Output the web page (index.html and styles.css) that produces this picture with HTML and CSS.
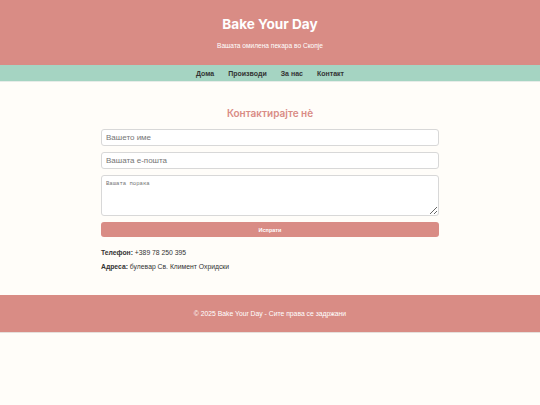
FILE: index.html
```
<!DOCTYPE html>
<html lang="mk">
<head>
<meta charset="utf-8">
<title>Bake Your Day</title>
<link rel="stylesheet" href="styles.css">
</head>
<body>
<header class="site-header">
  <h1 class="brand">Bake Your Day</h1>
  <p class="tagline">Вашата омилена пекара во Скопје</p>
</header>
<nav class="nav">
  <a href="#">Дома</a>
  <a href="#">Производи</a>
  <a href="#">За нас</a>
  <a href="#">Контакт</a>
</nav>
<main class="main">
  <h2 class="title">Контактирајте нè</h2>
  <form class="form">
    <input class="field" type="text" placeholder="Вашето име">
    <input class="field" type="email" placeholder="Вашата е-пошта">
    <textarea class="field area" placeholder="Вашата порака"></textarea>
    <button class="btn" type="button">Испрати</button>
  </form>
  <p class="info"><strong>Телефон:</strong> +389 78 250 395</p>
  <p class="info"><strong>Адреса:</strong> булевар Св. Климент Охридски</p>
</main>
<footer class="footer">
  <p>© 2025 Bake Your Day - Сите права се задржани</p>
</footer>
</body>
</html>
```
FILE: styles.css
```
* { box-sizing: border-box; }
html, body { margin: 0; padding: 0; }
body {
  background: #fffdf9;
  font-family: "Liberation Sans", Arial, sans-serif;
  color: #333;
}
.site-header {
  background: #d98c85;
  color: #fff;
  text-align: center;
  height: 65px;
  padding-top: 16px;
}
.brand {
  margin: 0;
  font-family: Inter, "Liberation Sans", sans-serif;
  font-size: 13.6px;
  font-weight: 700;
  line-height: 17px;
}
.tagline {
  margin: 8px 0 0;
  font-size: 6.6px;
  line-height: 9px;
}
.nav {
  background: #a5d4c2;
  height: 17px;
  display: flex;
  justify-content: center;
  align-items: center;
  gap: 14px;
  border-bottom: 1px solid #e6ece8;
}
.nav a {
  color: #333;
  text-decoration: none;
  font-weight: 700;
  font-size: 7px;
}
.main {
  width: 338px;
  margin: 0 auto;
  padding: 24px 0 23px;
}
.title {
  margin: 0 0 9px;
  text-align: center;
  color: #d98c85;
  font-family: Inter, "Liberation Sans", sans-serif;
  font-size: 10px;
  font-weight: 600;
  line-height: 14px;
}
.form {
  display: flex;
  flex-direction: column;
  gap: 6px;
}
.field {
  display: block;
  width: 100%;
  height: 17px;
  border: 1px solid #d8d8d8;
  border-radius: 3px;
  background: #fff;
  padding: 0 4px;
  font-family: "Liberation Sans", Arial, sans-serif;
  font-size: 8px;
  color: #333;
}
.field::placeholder { color: #757575; }
.area {
  height: 41px;
  padding: 4px;
  font-family: "Liberation Mono", monospace;
  font-size: 5.6px;
  resize: vertical;
}
.btn {
  height: 15px;
  border: none;
  border-radius: 3px;
  background: #d98c85;
  color: #fff;
  font-family: "Liberation Sans", Arial, sans-serif;
  font-size: 5.5px;
  font-weight: 700;
}
.info {
  margin: 0;
  font-size: 6.8px;
  line-height: 10px;
}
.form + .info { margin-top: 11px; }
.info + .info { margin-top: 4px; }
.footer {
  background: #d98c85;
  color: #fff;
  text-align: center;
  height: 38px;
  display: flex;
  align-items: center;
  justify-content: center;
  border-bottom: 1px solid #e6e0dc;
}
.footer p { margin: 0; font-size: 6.8px; }
```
